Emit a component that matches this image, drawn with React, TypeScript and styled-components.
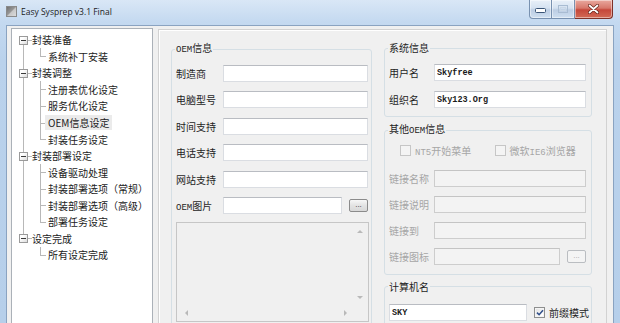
import React from 'react';
import styled, { createGlobalStyle } from 'styled-components';

type TreeNode = { text: React.ReactNode; level: 0 | 1; selected?: boolean };

const tree: TreeNode[] = [
  { text: '封装准备', level: 0 },
  { text: '系统补丁安装', level: 1 },
  { text: '封装调整', level: 0 },
  { text: '注册表优化设定', level: 1 },
  { text: '服务优化设定', level: 1 },
  { text: 'OEM信息设定', level: 1, selected: true },
  { text: '封装任务设定', level: 1 },
  { text: '封装部署设定', level: 0 },
  { text: '设备驱动处理', level: 1 },
  { text: '封装部署选项（常规）', level: 1 },
  { text: '封装部署选项（高级）', level: 1 },
  { text: '部署任务设定', level: 1 },
  { text: '设定完成', level: 0 },
  { text: '所有设定完成', level: 1 },
];

const oemFields = ['制造商', '电脑型号', '时间支持', '电话支持', '网站支持'];
const linkFields = ['链接名称', '链接说明', '链接到'];

const App = () => {
  const lastTop = tree.map(n => n.level).lastIndexOf(0);

  return (
    <Window>
      <GlobalStyle />
      <TitleBar>
        <AppIcon width="11" height="11" viewBox="0 0 11 11">
          <defs>
            <linearGradient id="ic" x1="0" y1="0" x2="1" y2="1">
              <stop offset="0" stopColor="#6d6d6d" />
              <stop offset="0.5" stopColor="#9a9a9a" />
              <stop offset="1" stopColor="#d6d6d6" />
            </linearGradient>
          </defs>
          <rect x="0.5" y="0.5" width="10" height="10" fill="url(#ic)" stroke="#8a8a8a" />
          <path d="M1 10 L10 1 L10 10 Z" fill="#e2e2e2" opacity="0.6" />
        </AppIcon>
        <Title>Easy Sysprep v3.1 Final</Title>
        <Caption>
          <CapButton $w={23} $kind="min">
            <svg width="11" height="5" viewBox="0 0 11 5">
              <rect x="0.5" y="0.5" width="10" height="4" rx="1" fill="#fff" stroke="#3b5577" />
            </svg>
          </CapButton>
          <CapButton $w={23} $kind="max">
            <svg width="10" height="8" viewBox="0 0 10 8">
              <rect x="0.5" y="0.5" width="9" height="7" fill="none" stroke="#a9bcd2" />
              <rect x="2.5" y="2.5" width="5" height="3" fill="none" stroke="#c9d7e6" />
            </svg>
          </CapButton>
          <CapButton $w={38} $kind="close">
            <svg width="11" height="10" viewBox="0 0 11 10">
              <path d="M1.5 1.5 L9.5 8.5 M9.5 1.5 L1.5 8.5" stroke="#5b1a12" strokeWidth="3" strokeLinecap="round" />
              <path d="M1.5 1.5 L9.5 8.5 M9.5 1.5 L1.5 8.5" stroke="#ffffff" strokeWidth="1.8" strokeLinecap="round" />
            </svg>
          </CapButton>
        </Caption>
      </TitleBar>

      <Client>
        <Tree>
          {tree.map((n, i) => {
            const isTop = n.level === 0;
            const next = tree[i + 1];
            const lastChild = !isTop && (!next || next.level === 0);
            const trunk = isTop ? (i === 0 ? 'bottom' : i === lastTop ? 'top' : 'full') : i > lastTop ? null : 'full';
            return (
              <TreeRow key={i} $level={n.level}>
                {trunk && <VLine $x={11} $part={trunk} />}
                {isTop ? (
                  <>
                    <HLine $x={12} $w={8} />
                    <Expander />
                  </>
                ) : (
                  <>
                    <VLine $x={28} $part={lastChild ? 'top' : 'full'} />
                    <HLine $x={28} $w={6} />
                  </>
                )}
                <TreeText $selected={n.selected}>{n.text}</TreeText>
              </TreeRow>
            );
          })}
        </Tree>

        <Page>
          <Group $width={201} $top={8.5}>
            <Legend>
              <Mono>OEM</Mono>信息
            </Legend>
            <Rows $gap={9.5}>
              {oemFields.map(f => (
                <Row key={f}>
                  <Label $width={47}>{f}</Label>
                  <TextBox $width={145} readOnly value="" />
                </Row>
              ))}
              <Row>
                <Label $width={47}>
                  <Mono>OEM</Mono>图片
                </Label>
                <TextBox $width={119} readOnly value="" />
                <Browse>...</Browse>
              </Row>
            </Rows>
            <ListBox>
              <ListArea />
              <VScroll>
                <Arrow $dir="up" />
                <Arrow $dir="down" />
              </VScroll>
              <HScroll>
                <Arrow $dir="left" />
                <Arrow $dir="right" />
              </HScroll>
              <Corner />
            </ListBox>
          </Group>

          <Column>
            <Group $width={208} $bottom={8}>
              <Legend>系统信息</Legend>
              <Rows $gap={10}>
                <Row>
                  <Label $width={45}>用户名</Label>
                  <TextBox $width={152} readOnly value="Skyfree" />
                </Row>
                <Row>
                  <Label $width={45}>组织名</Label>
                  <TextBox $width={152} readOnly value="Sky123.Org" />
                </Row>
              </Rows>
            </Group>

            <Group $width={208} $top={6} $bottom={9}>
              <Legend>
                其他<Mono>OEM</Mono>信息
              </Legend>
              <CheckRow>
                <CheckItem $disabled>
                  <Check $disabled />
                  <span>
                    <Mono>NT5</Mono>开始菜单
                  </span>
                </CheckItem>
                <CheckItem $disabled>
                  <Check $disabled />
                  <span>
                    微软<Mono>IE6</Mono>浏览器
                  </span>
                </CheckItem>
              </CheckRow>
              <Rows $gap={9}>
                {linkFields.map(f => (
                  <Row key={f}>
                    <Label $width={45} $disabled>
                      {f}
                    </Label>
                    <TextBox $width={152} $disabled readOnly value="" />
                  </Row>
                ))}
                <Row>
                  <Label $width={45} $disabled>
                    链接图标
                  </Label>
                  <TextBox $width={126} $disabled readOnly value="" />
                  <Browse $disabled>...</Browse>
                </Row>
              </Rows>
            </Group>

            <Group $width={208} $top={11.5} $bottom={20}>
              <Legend>计算机名</Legend>
              <Row>
                <TextBox $width={138} readOnly value="SKY" />
                <CheckItem $gap={4} style={{ marginLeft: 7 }}>
                  <Check $checked>
                    <svg width="8" height="7" viewBox="0 0 8 7">
                      <path d="M1 3.6 L3.1 5.7 L7 1.2" fill="none" stroke="#32508a" strokeWidth="1.6" />
                    </svg>
                  </Check>
                  <span>前缀模式</span>
                </CheckItem>
              </Row>
            </Group>
          </Column>
        </Page>
      </Client>
    </Window>
  );
};

export default App;

const GlobalStyle = createGlobalStyle`
  html, body { margin: 0; padding: 0; background: #ffffff; }
  body {
    font-family: "Noto Sans CJK SC", "Noto Sans", sans-serif;
    color: #1e1e1e;
  }
`;

const Window = styled.div`
  width: 620px;
  height: 323px;
  overflow: hidden;
  display: flex;
  flex-direction: column;
  background: linear-gradient(to bottom, #d9e7f6 0px, #c4d9f0 22px, #bad2ec 60px, #b6cfea 100%);
`;

const TitleBar = styled.div`
  height: 25px;
  flex-shrink: 0;
  display: flex;
  align-items: flex-start;
  padding-left: 6px;
`;

const AppIcon = styled.svg`
  margin-top: 6px;
  flex-shrink: 0;
`;

const Title = styled.div`
  margin-left: 4px;
  font-family: "Open Sans", "Noto Sans", sans-serif;
  font-size: 8.5px;
  line-height: 24px;
  color: #1b1b1b;
`;

const Caption = styled.div`
  margin-left: auto;
  margin-right: 7px;
  display: flex;
  height: 19px;
`;

const CapButton = styled.div<{ $w: number; $kind: 'min' | 'max' | 'close' }>`
  width: ${p => p.$w}px;
  height: 19px;
  box-sizing: border-box;
  display: flex;
  align-items: ${p => (p.$kind === 'min' ? 'flex-end' : 'center')};
  justify-content: center;
  padding-bottom: ${p => (p.$kind === 'min' ? '5px' : '0')};
  border: 1px solid ${p => (p.$kind === 'close' ? '#7e3128' : '#7891b0')};
  border-top: none;
  border-left-width: ${p => (p.$kind === 'min' ? '1px' : '0')};
  border-radius: ${p => (p.$kind === 'min' ? '0 0 0 4px' : p.$kind === 'close' ? '0 0 4px 0' : '0')};
  background: ${p =>
    p.$kind === 'close'
      ? 'linear-gradient(to bottom, #e9a99f 0%, #d7786b 45%, #c5473a 55%, #d26a55 100%)'
      : 'linear-gradient(to bottom, #e9f0f8 0%, #d5e2f1 45%, #bccde3 55%, #cfdff0 100%)'};
  box-shadow: inset 0 0 0 1px rgba(255, 255, 255, 0.45);
`;

const Client = styled.div`
  flex: 1;
  min-height: 0;
  margin: 0 6px;
  border: 1px solid #8aa3c1;
  border-bottom: none;
  background: #f0f0f0;
  display: flex;
  align-items: stretch;
  gap: 5px;
  padding: 2px 5px 0 4px;
`;

const Tree = styled.div`
  width: 142px;
  flex-shrink: 0;
  box-sizing: border-box;
  border: 1px solid #abb1b8;
  border-bottom: none;
  background: #ffffff;
  padding-top: 2.5px;
`;

const TreeRow = styled.div<{ $level: number }>`
  position: relative;
  height: 16.55px;
  display: flex;
  align-items: center;
  padding-left: ${p => (p.$level === 0 ? 20 : 36)}px;
  font-size: 10px;
  white-space: nowrap;
`;

const VLine = styled.span<{ $x: number; $part: 'full' | 'top' | 'bottom' }>`
  position: absolute;
  left: ${p => p.$x}px;
  top: ${p => (p.$part === 'bottom' ? '50%' : '0')};
  bottom: ${p => (p.$part === 'top' ? '50%' : '0')};
  border-left: 1px solid #b8b8b8;
`;

const HLine = styled.span<{ $x: number; $w: number }>`
  position: absolute;
  left: ${p => p.$x}px;
  top: 50%;
  width: ${p => p.$w}px;
  border-top: 1px solid #b8b8b8;
`;

const Expander = styled.span`
  position: absolute;
  left: 7px;
  top: 50%;
  margin-top: -4px;
  width: 9px;
  height: 9px;
  box-sizing: border-box;
  border: 1px solid #9a9a9a;
  background: linear-gradient(135deg, #ffffff 30%, #dcdcdc 100%);
  &::after {
    content: '';
    position: absolute;
    left: 1px;
    top: 3px;
    width: 5px;
    border-top: 1px solid #3a3a3a;
  }
`;

const TreeText = styled.span<{ $selected?: boolean }>`
  position: relative;
  line-height: 15px;
  padding: 0 3px;
  margin-left: -3px;
  background: ${p => (p.$selected ? '#ebebeb' : 'transparent')};
  color: #222;
`;

const Page = styled.div`
  width: 449px;
  flex-shrink: 0;
  box-sizing: border-box;
  margin-top: 1px;
  border: 1px solid #d2d2d2;
  border-bottom: none;
  box-shadow: inset 1px 1px 0 #ffffff;
  display: flex;
  align-items: flex-start;
  gap: 12px;
  padding: 12px 0 0 12px;
`;

const Column = styled.div`
  display: flex;
  flex-direction: column;
  gap: 6px;
`;

const Group = styled.fieldset<{ $width: number; $top?: number; $bottom?: number }>`
  margin: 0;
  min-width: 0;
  width: ${p => p.$width}px;
  box-sizing: border-box;
  border: 1px solid #d5dfe5;
  border-radius: 3px;
  padding: ${p => p.$top ?? 10}px 2px ${p => p.$bottom ?? 20}px 4px;
`;

const Legend = styled.legend`
  padding: 0 1px;
  margin-left: -1px;
  font-size: 10px;
  line-height: 12px;
  color: #1e1e1e;
`;

const Mono = styled.span`
  font-family: "Liberation Mono", "DejaVu Sans Mono", monospace;
  font-size: 9px;
`;

const Rows = styled.div<{ $gap?: number }>`
  display: flex;
  flex-direction: column;
  gap: ${p => p.$gap ?? 9.6}px;
`;

const Row = styled.div`
  display: flex;
  align-items: center;
  height: 17px;
`;

const Label = styled.span<{ $width: number; $disabled?: boolean }>`
  width: ${p => p.$width}px;
  flex-shrink: 0;
  font-size: 10px;
  white-space: nowrap;
  color: ${p => (p.$disabled ? '#a6a6a6' : '#1e1e1e')};
`;

const TextBox = styled.input<{ $width: number; $disabled?: boolean }>`
  width: ${p => p.$width}px;
  height: 17px;
  box-sizing: border-box;
  margin: 0;
  padding: 0 2px;
  outline: none;
  border: 1px solid ${p => (p.$disabled ? '#cdcdcd' : '#dadde2')};
  border-top-color: ${p => (p.$disabled ? '#c4c4c4' : '#b9bcc2')};
  background: ${p => (p.$disabled ? '#f3f3f3' : '#ffffff')};
  font-family: "Liberation Mono", "DejaVu Sans Mono", monospace;
  font-size: 8.5px;
  font-weight: bold;
  color: #1a1a1a;
`;

const Browse = styled.div<{ $disabled?: boolean }>`
  width: 19px;
  height: 13px;
  box-sizing: border-box;
  margin-left: 7px;
  border: 1px solid ${p => (p.$disabled ? '#babdc1' : '#8b8b8b')};
  border-radius: 2px;
  background: ${p => (p.$disabled ? '#f4f4f4' : 'linear-gradient(to bottom, #f7f7f7, #e3e3e3 50%, #d8d8d8)')};
  color: ${p => (p.$disabled ? '#a8a8a8' : '#333')};
  font-family: "Liberation Sans", sans-serif;
  font-size: 8px;
  line-height: 9px;
  text-align: center;
`;

const ListBox = styled.div`
  margin-top: 8px;
  width: 193px;
  height: 100px;
  box-sizing: border-box;
  border: 1px solid #c6c6c6;
  background: #f0f0f0;
  display: grid;
  grid-template-columns: 1fr 17px;
  grid-template-rows: 1fr 17px;
`;

const ListArea = styled.div``;

const VScroll = styled.div`
  display: flex;
  flex-direction: column;
  justify-content: space-between;
  align-items: center;
  padding: 7px 0 5px;
`;

const HScroll = styled.div`
  display: flex;
  justify-content: space-between;
  align-items: center;
  padding: 0 4px 0 8px;
`;

const Corner = styled.div``;

const Arrow = styled.span<{ $dir: 'up' | 'down' | 'left' | 'right' }>`
  width: 0;
  height: 0;
  border: 3px solid transparent;
  ${p =>
    p.$dir === 'up'
      ? 'border-bottom-color: #b9b9b9; border-top-width: 0;'
      : p.$dir === 'down'
      ? 'border-top-color: #b9b9b9; border-bottom-width: 0;'
      : p.$dir === 'left'
      ? 'border-right-color: #b9b9b9; border-left-width: 0;'
      : 'border-left-color: #b9b9b9; border-right-width: 0;'}
`;

const CheckRow = styled.div`
  display: flex;
  align-items: center;
  height: 14px;
  padding-left: 11px;
  margin-bottom: 12.5px;
`;

const CheckItem = styled.div<{ $disabled?: boolean; $gap?: number }>`
  width: ${p => (p.$disabled ? '100px' : 'auto')};
  display: flex;
  align-items: center;
  gap: ${p => p.$gap ?? 4}px;
  font-size: 10px;
  white-space: nowrap;
  color: ${p => (p.$disabled ? '#a6a6a6' : '#1e1e1e')};
`;

const Check = styled.span<{ $disabled?: boolean; $checked?: boolean }>`
  width: 11px;
  height: 11px;
  flex-shrink: 0;
  box-sizing: border-box;
  display: inline-flex;
  align-items: center;
  justify-content: center;
  border: 1px solid ${p => (p.$disabled ? '#c6c6c6' : '#8e8f8f')};
  background: ${p => (p.$disabled ? '#f4f4f4' : 'linear-gradient(135deg, #dedede, #ffffff 80%)')};
  box-shadow: ${p => (p.$disabled ? 'none' : 'inset 0 0 0 1px #f4f4f4')};
`;
